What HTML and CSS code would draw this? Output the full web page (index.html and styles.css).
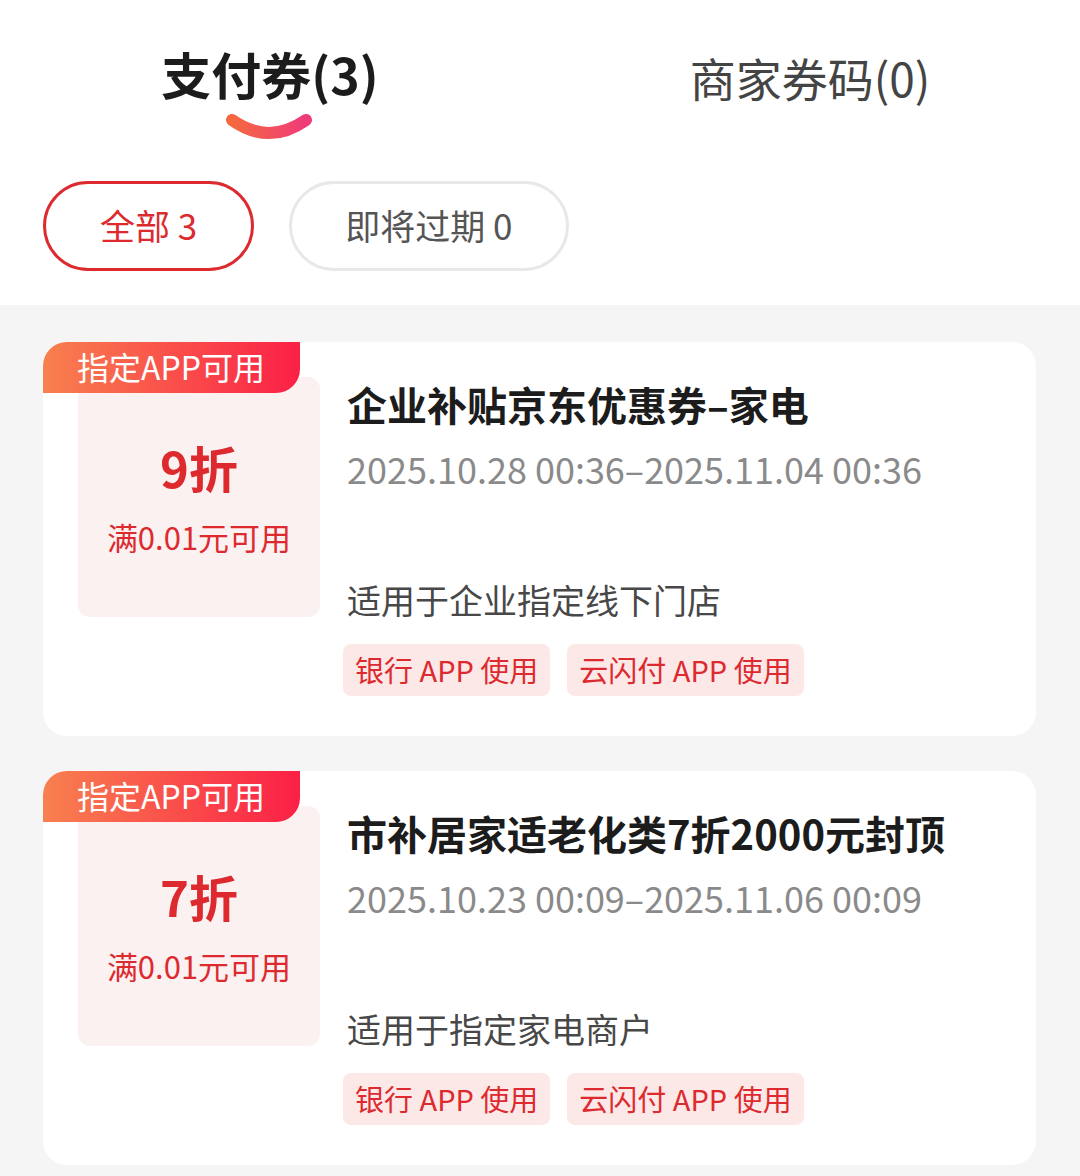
FILE: index.html
```html
<!DOCTYPE html>
<html lang="zh-CN">
<head>
  <meta charset="UTF-8" />
  <title>支付券</title>
  <link rel="stylesheet" href="styles.css">
</head>
<body>
  <div class="top">
    <div class="tabs">
      <div class="tab active">
        <span class="tab-label">支付券(3)</span>
        <svg class="tab-line" width="88" height="30" viewBox="0 0 88 30">
          <defs>
            <linearGradient id="lineGrad" x1="0" y1="0" x2="1" y2="0">
              <stop offset="0" stop-color="#f6693f" />
              <stop offset="1" stop-color="#ef3b79" />
            </linearGradient>
          </defs>
          <path d="M7 8 Q44 34 81 8" fill="none" stroke="url(#lineGrad)" stroke-width="12" stroke-linecap="round" />
        </svg>
      </div>
      <div class="tab">
        <span class="tab-label">商家券码(0)</span>
      </div>
    </div>

    <div class="filters">
      <div class="chip on">全部 3</div>
      <div class="chip">即将过期 0</div>
    </div>
  </div>

  <main class="list">
    <div class="card">
      <div class="badge">指定APP可用</div>
      <div class="face">
        <div class="rate">9折</div>
        <div class="cond">满0.01元可用</div>
      </div>
      <div class="info">
        <div class="title">企业补贴京东优惠券–家电</div>
        <div class="date">2025.10.28 00:36–2025.11.04 00:36</div>
        <div class="scope">适用于企业指定线下门店</div>
        <div class="tags">
          <span class="tag">银行 APP 使用</span>
          <span class="tag">云闪付 APP 使用</span>
        </div>
      </div>
    </div>

    <div class="card">
      <div class="badge">指定APP可用</div>
      <div class="face">
        <div class="rate">7折</div>
        <div class="cond">满0.01元可用</div>
      </div>
      <div class="info">
        <div class="title">市补居家适老化类7折2000元封顶</div>
        <div class="date">2025.10.23 00:09–2025.11.06 00:09</div>
        <div class="scope">适用于指定家电商户</div>
        <div class="tags">
          <span class="tag">银行 APP 使用</span>
          <span class="tag">云闪付 APP 使用</span>
        </div>
      </div>
    </div>
  </main>
</body>
</html>
```

FILE: styles.css
```css
:root {
  --red: #dc2a2f;
  --text: #1c1c1c;
  --muted: #8a8a8a;
  --grey-bg: #f5f5f5;
}

html, body {
  margin: 0;
  padding: 0;
  background: var(--grey-bg);
  font-family: "Noto Sans CJK SC", "Noto Sans", sans-serif;
  color: var(--text);
}

.top {
  background: #fff;
  padding-bottom: 34px;
}

.tabs {
  display: grid;
  grid-template-columns: 1fr 1fr;
  align-items: start;
  padding-top: 42px;
}

.tab {
  display: flex;
  flex-direction: column;
  align-items: center;
  height: 102px;
}

.tab-label {
  font-size: 46px;
  line-height: 62px;
  color: #444;
  padding-top: 4px;
}

.tab.active .tab-label {
  font-size: 50px;
  font-weight: bold;
  color: var(--text);
  padding-top: 0;
}

.tab-line {
  display: block;
  margin-top: 8px;
  margin-right: 3px;
}

.filters {
  display: flex;
  gap: 35px;
  padding: 37px 43px 0;
}

.chip {
  height: 84px;
  line-height: 82px;
  padding: 0 53px;
  border: 3px solid #e8e8e8;
  border-radius: 45px;
  font-size: 35px;
  color: #555;
}

.chip.on {
  border-color: var(--red);
  color: var(--red);
  padding: 0 54px;
}

.list {
  display: flex;
  flex-direction: column;
  gap: 35px;
  padding: 37px 44px 12px 43px;
}

.card {
  position: relative;
  display: flex;
  gap: 27px;
  padding: 35px 35px 40px;
  background: #fff;
  border-radius: 24px;
}

.badge {
  position: absolute;
  top: 0;
  left: 0;
  width: 257px;
  height: 51px;
  box-sizing: border-box;
  padding-left: 34px;
  line-height: 48px;
  font-size: 32px;
  color: #fff;
  background: linear-gradient(90deg, #f8804f, #fb2046);
  border-radius: 24px 0 24px 0;
}

.face {
  flex: none;
  width: 242px;
  height: 240px;
  box-sizing: border-box;
  padding-top: 2px;
  display: flex;
  flex-direction: column;
  align-items: center;
  justify-content: center;
  gap: 18px;
  background: #fcf1f1;
  border-radius: 12px;
  color: var(--red);
}

.rate {
  font-size: 49px;
  line-height: 60px;
  font-weight: bold;
}

.cond {
  font-size: 31px;
  line-height: 44px;
}

.info {
  display: flex;
  flex-direction: column;
  align-items: flex-start;
}

.title {
  font-size: 40px;
  line-height: 54px;
  font-weight: bold;
  color: var(--text);
}

.date {
  margin-top: 12px;
  font-size: 36px;
  line-height: 50px;
  color: var(--muted);
}

.scope {
  margin-top: 83px;
  font-size: 34px;
  line-height: 48px;
  color: #484848;
}

.tags {
  display: flex;
  gap: 17px;
  margin-top: 20px;
  margin-left: -4px;
}

.tag {
  height: 52px;
  line-height: 50px;
  padding: 0 12px;
  border-radius: 8px;
  background: #fde8e8;
  color: var(--red);
  font-size: 29px;
}
```
